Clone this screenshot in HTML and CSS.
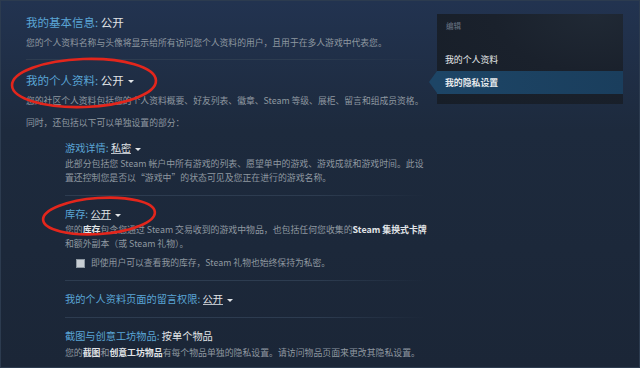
FILE: index.html
```html
<!DOCTYPE html>
<html lang="zh-CN">
  <head>
    <meta charset="UTF-8" />
    <title>隐私设置</title>
    <link rel="stylesheet" href="styles.css">
  </head>
  <body>
    <div class="frame">
      <div class="main">
        <div class="setting-title"><span class="label">我的基本信息:</span> <span class="value">公开</span></div>
        <p class="desc top-desc">您的个人资料名称与头像将显示给所有访问您个人资料的用户，且用于在多人游戏中代表您。</p>
        <div class="divider"></div>

        <div class="setting-title"><span class="label">我的个人资料:</span> <span class="value">公开</span><span class="caret"></span></div>
        <p class="desc top-desc">您的社区个人资料包括您的个人资料概要、好友列表、徽章、Steam 等级、展柜、留言和组成员资格。</p>
        <p class="desc note">同时，还包括以下可以单独设置的部分：</p>

        <div class="sub">
          <div class="sub-title first"><span class="label">游戏详情:</span> <span class="value dd">私密</span><span class="caret"></span></div>
          <p class="desc sub-desc">此部分包括您 Steam 帐户中所有游戏的列表、愿望单中的游戏、游戏成就和游戏时间。此设<br>置还控制您是否以“游戏中”的状态可见及您正在进行的游戏名称。</p>
          <div class="divider"></div>

          <div class="sub-title"><span class="label">库存:</span> <span class="value dd">公开</span><span class="caret"></span></div>
          <p class="desc sub-desc">您的<b>库存</b>包含您通过 Steam 交易收到的游戏中物品，也包括任何您收集的<b>Steam 集换式卡牌</b><br>和额外副本（或 Steam 礼物）。</p>
          <label class="check-row"><span class="checkbox"></span>即使用户可以查看我的库存，Steam 礼物也始终保持为私密。</label>
          <div class="divider"></div>

          <div class="sub-title"><span class="label">我的个人资料页面的留言权限:</span> <span class="value dd">公开</span><span class="caret"></span></div>
          <div class="divider"></div>

          <div class="sub-title"><span class="label">截图与创意工坊物品:</span> <span class="value">按单个物品</span></div>
          <p class="desc sub-desc last">您的<b>截图</b>和<b>创意工坊物品</b>有每个物品单独的隐私设置。请访问物品页面来更改其隐私设置。</p>
        </div>
      </div>

      <div class="sidebar">
        <div class="sidebar-head">编辑</div>
        <div class="sidebar-item">我的个人资料</div>
        <div class="sidebar-item active">我的隐私设置</div>
      </div>

      <!-- red hand-drawn marks on top of the page -->
      <svg class="marks" width="640" height="368" viewBox="0 0 640 368">
        <ellipse cx="84" cy="83" rx="72" ry="24" transform="rotate(-2 84 83)" />
        <ellipse cx="99" cy="216" rx="56" ry="18" transform="rotate(-4 99 216)" />
      </svg>
    </div>
  </body>
</html>
```

FILE: styles.css
```css
body {
  margin: 0;
  background: #1b2637;
}

.frame {
  position: relative;
  display: flex;
  width: 640px;
  height: 368px;
  box-sizing: border-box;
  border: 1px solid #2c3b4f;
  overflow: hidden;
  font-family: "Noto Sans CJK SC", "Noto Sans", sans-serif;
  background: linear-gradient(to bottom, #223350 0, #1d2a3d 130px, #1b2637 100%);
}

.main {
  width: 400px;
  padding: 13px 0 0 25px;
  flex-shrink: 0;
}

.setting-title {
  font-size: 11.5px;
  line-height: 16px;
  white-space: nowrap;
}

.label {
  color: #5aa5d6;
}

.value {
  color: #e1e4e7;
}

.value.dd {
  border-bottom: 1px solid #b9c0c7;
  line-height: 11px;
  display: inline-block;
}

.caret {
  display: inline-block;
  margin-left: 4px;
  vertical-align: middle;
  border-left: 3px solid transparent;
  border-right: 3px solid transparent;
  border-top: 3px solid #e1e4e7;
}

.desc {
  margin: 0;
  font-size: 8.8px;
  line-height: 14px;
  color: #8f98a0;
  white-space: nowrap;
}

.desc b {
  color: #e1e4e7;
}

.top-desc {
  margin-top: 6px;
}

.note {
  margin-top: 8px;
}

.divider {
  height: 1px;
  margin: 9px 0 12px;
  background: linear-gradient(to right, #2d3c50 0, #2d3c50 70%, rgba(45, 60, 80, 0) 100%);
}

.sub {
  margin-left: 39px;
}

.sub .divider {
  margin: 10px 0;
}

.sub-title {
  font-size: 10.2px;
  line-height: 16px;
  white-space: nowrap;
}

.sub-title.first {
  margin-top: 10px;
}

.sub-desc {
  font-size: 8.9px;
  margin-top: 1px;
}

.sub-desc.last {
  margin-top: 2px;
}

.check-row {
  display: flex;
  align-items: center;
  margin: 5px 0 0 11px;
  font-size: 8.8px;
  line-height: 14px;
  color: #8f98a0;
  white-space: nowrap;
}

.checkbox {
  width: 7px;
  height: 7px;
  margin-right: 6px;
  background: #c8ced4;
  border: 1px solid #8d97a1;
}

.sidebar {
  position: relative;
  align-self: flex-start;
  width: 186px;
  margin: 13px 0 0 11px;
  padding-bottom: 10px;
  background: radial-gradient(ellipse at 85% 0%, #202935 0, #1a212c 45%, #171e28 100%);
}

.sidebar-head {
  padding: 6px 9px 0;
  font-size: 7.5px;
  line-height: 12px;
  color: #6a7584;
}

.sidebar-item {
  margin-top: 20px;
  padding-left: 8px;
  font-size: 8.9px;
  line-height: 16px;
  color: #e6e9ec;
}

.sidebar-item.active {
  position: relative;
  margin-top: 3px;
  line-height: 23px;
  font-weight: bold;
  background: linear-gradient(to right, #1d4566, #1a3e5d);
}

.sidebar-item.active::before {
  content: "";
  position: absolute;
  left: -8px;
  top: 0;
  border-top: 11.5px solid transparent;
  border-bottom: 11.5px solid transparent;
  border-right: 8px solid #1d4566;
}

.marks {
  position: absolute;
  left: -1px;
  top: -1px;
  pointer-events: none;
}

.marks ellipse {
  fill: none;
  stroke: #e3261c;
  stroke-width: 2.6;
}
```
